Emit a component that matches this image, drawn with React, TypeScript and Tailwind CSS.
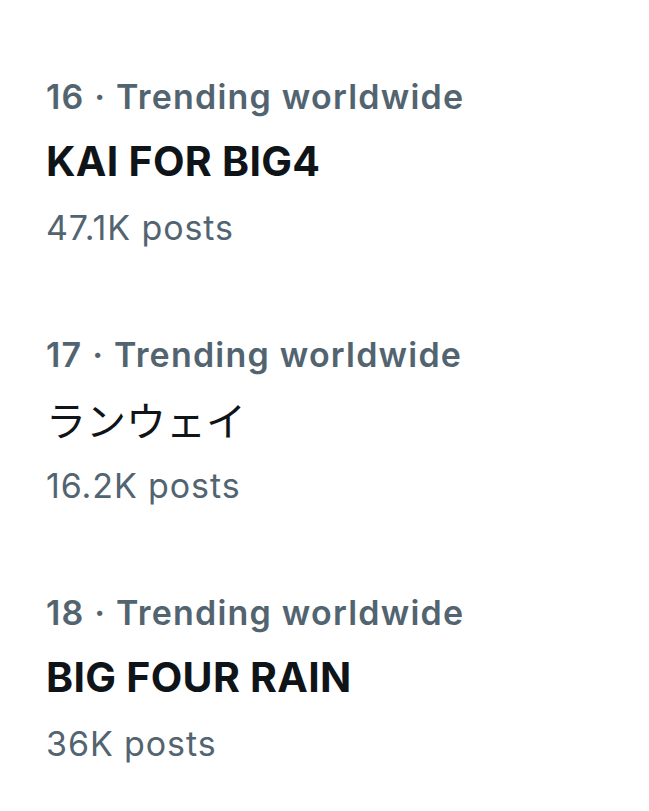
const trends = [
  { rank: 16, name: 'KAI FOR BIG4', posts: '47.1K posts' },
  { rank: 17, name: 'ランウェイ', posts: '16.2K posts', jp: true },
  { rank: 18, name: 'BIG FOUR RAIN', posts: '36K posts' },
];

export default function App() {
  return (
    <div
      className="w-[649px] h-[811px] bg-white pt-[67px] px-[46px] flex flex-col gap-[68px]"
      style={{ fontFamily: 'Inter, "Noto Sans CJK JP", sans-serif' }}
    >
      {trends.map((t) => (
        <div key={t.rank} className="flex flex-col">
          <div className="text-[34px] leading-[60px] font-semibold tracking-[1.2px] text-[#536471] whitespace-nowrap">
            {t.rank} · Trending worldwide
          </div>
          <div
            className={
              t.jp
                ? 'text-[40px] leading-[68px] font-normal text-[#0f1419] whitespace-nowrap'
                : 'text-[41px] leading-[68px] font-bold tracking-[0.3px] text-[#0f1419] whitespace-nowrap'
            }
            style={t.jp ? { fontFamily: '"Noto Sans CJK JP", sans-serif' } : undefined}
          >
            {t.name}
          </div>
          <div className="pt-[4px] text-[34px] leading-[58px] tracking-[0.9px] text-[#536471] whitespace-nowrap">
            {t.posts}
          </div>
        </div>
      ))}
    </div>
  );
}
